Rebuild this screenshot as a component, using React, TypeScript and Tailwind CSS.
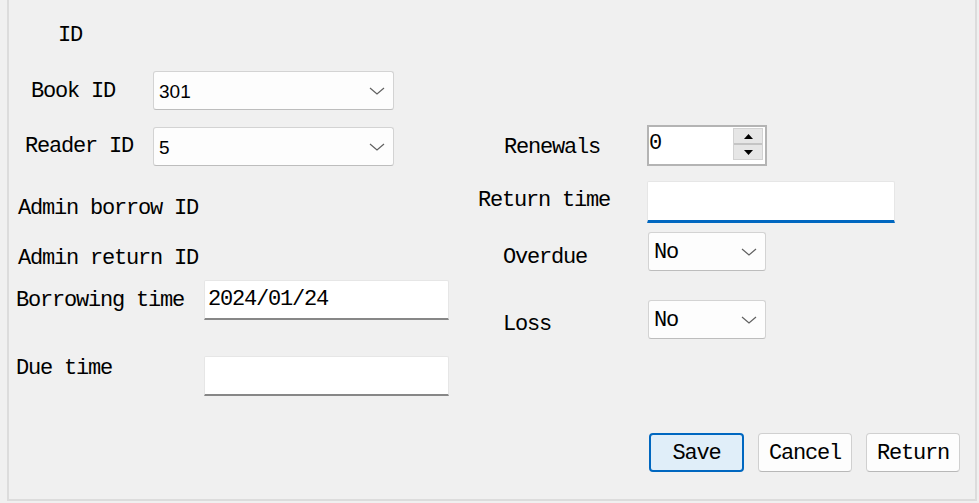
import React from "react";

const MONO = "font-['Liberation_Mono',monospace] text-[22px] leading-[26px] tracking-[-1.2px] text-black whitespace-nowrap";

function Label({ text, className = "" }: { text: string; className?: string }) {
  return <div className={`${MONO} ${className}`}>{text}</div>;
}

function Chevron() {
  return (
    <svg width="16" height="8" viewBox="0 0 16 8" className="shrink-0">
      <path d="M1 1 L8 7 L15 1" fill="none" stroke="#606060" strokeWidth="1.2" />
    </svg>
  );
}

function Combo({ value, mono, className = "" }: { value: string; mono?: boolean; className?: string }) {
  return (
    <div
      className={`flex items-center justify-between h-[39px] bg-[#fdfdfd] border border-[#d3d3d3] border-b-[#bdbdbd] rounded-[3px] pr-[8px] ${className}`}
    >
      {mono ? (
        <div className={`${MONO} pl-[5px] pt-[3px]`}>{value}</div>
      ) : (
        <div className="pl-[5px] pt-[2px] font-['Liberation_Sans',Arial,sans-serif] text-[19px] leading-[22px] text-black">{value}</div>
      )}
      <Chevron />
    </div>
  );
}

function TextBox({ value = "", focused, className = "" }: { value?: string; focused?: boolean; className?: string }) {
  return (
    <div
      className={`bg-white border border-[#e6e6e6] rounded-t-[2px] ${
        focused ? "border-b-[3px] border-b-[#0067c0]" : "border-b-2 border-b-[#878787]"
      } pl-[3px] pt-[6px] ${className}`}
    >
      {value && <div className={MONO}>{value}</div>}
    </div>
  );
}

function Spin() {
  return (
    <div className="flex items-start w-[120px] h-[41px] bg-white border-2 border-[#b4b4b4]">
      <div className={`${MONO} flex-1 pt-[4px]`}>0</div>
      <div className="mt-[1px] mr-[2px] w-[30px] h-[32px] flex flex-col bg-[#e6e6e6] border border-[#d2d2d2]">
        <div className="flex-1 flex items-center justify-center border-b-2 border-[#c4c4c4]">
          <svg width="11" height="7" viewBox="0 0 11 7">
            <path d="M1 6 L5.5 1 L10 6 Z" fill="#000" />
          </svg>
        </div>
        <div className="flex-1 flex items-center justify-center">
          <svg width="11" height="7" viewBox="0 0 11 7">
            <path d="M1 1 L10 1 L5.5 6 Z" fill="#000" />
          </svg>
        </div>
      </div>
    </div>
  );
}

function Button({ text, primary, className = "" }: { text: string; primary?: boolean; className?: string }) {
  return (
    <div
      className={`flex items-center justify-center h-[39px] rounded-[4px] ${
        primary ? "bg-[#e0eef9] border-2 border-[#0067c0]" : "bg-[#fdfdfd] border border-[#d0d0d0] border-b-[#b8b8b8]"
      } ${className}`}
    >
      <div className={`${MONO} pt-[3px]`}>{text}</div>
    </div>
  );
}

export default function App() {
  return (
    <div className="w-[979px] h-[503px] bg-[#f0f0f0] overflow-hidden">
      <div className="ml-[7px] w-[970px] h-[501px] border-x-2 border-b-2 border-[#dcdcdc] flex flex-col">
        <div className="flex h-[433px]">
          {/* left column */}
          <div className="w-[469px] flex flex-col">
            <div className="h-[71px] pl-[49px] pt-[23px]">
              <Label text="ID" />
            </div>
            <div className="h-[56px] flex items-start">
              <div className="w-[144px] pl-[22px] pt-[8px]">
                <Label text="Book ID" />
              </div>
              <Combo value="301" className="w-[241px]" />
            </div>
            <div className="h-[69px] flex items-start">
              <div className="w-[144px] pl-[16px] pt-[7px]">
                <Label text="Reader ID" />
              </div>
              <Combo value="5" className="w-[241px]" />
            </div>
            <div className="h-[50px] pl-[9px]">
              <Label text="Admin borrow ID" />
            </div>
            <div className="h-[34px] pl-[9px]">
              <Label text="Admin return ID" />
            </div>
            <div className="h-[76px] flex items-start">
              <div className="w-[195px] pl-[7px] pt-[8px]">
                <Label text="Borrowing time" />
              </div>
              <TextBox value="2024/01/24" className="w-[245px] h-[40px]" />
            </div>
            <div className="flex items-start">
              <div className="w-[195px] pl-[7px]">
                <Label text="Due time" />
              </div>
              <TextBox className="w-[245px] h-[40px]" />
            </div>
          </div>
          {/* right column */}
          <div className="flex-1 flex flex-col">
            <div className="h-[125px]" />
            <div className="h-[56px] flex items-start">
              <div className="w-[169px] pl-[26px] pt-[10px]">
                <Label text="Renewals" />
              </div>
              <Spin />
            </div>
            <div className="h-[51px] flex items-start">
              <div className="w-[169px] pt-[7px]">
                <Label text="Return time" />
              </div>
              <TextBox focused className="w-[248px] h-[42px]" />
            </div>
            <div className="h-[68px] flex items-start">
              <div className="w-[170px] pl-[25px] pt-[13px]">
                <Label text="Overdue" />
              </div>
              <Combo value="No" mono className="w-[118px]" />
            </div>
            <div className="flex items-start">
              <div className="w-[170px] pl-[25px] pt-[12px]">
                <Label text="Loss" />
              </div>
              <Combo value="No" mono className="w-[118px]" />
            </div>
          </div>
        </div>
        <div className="flex justify-end gap-[14px] pr-[15px]">
          <Button text="Save" primary className="w-[95px]" />
          <Button text="Cancel" className="w-[94px]" />
          <Button text="Return" className="w-[94px]" />
        </div>
      </div>
    </div>
  );
}
